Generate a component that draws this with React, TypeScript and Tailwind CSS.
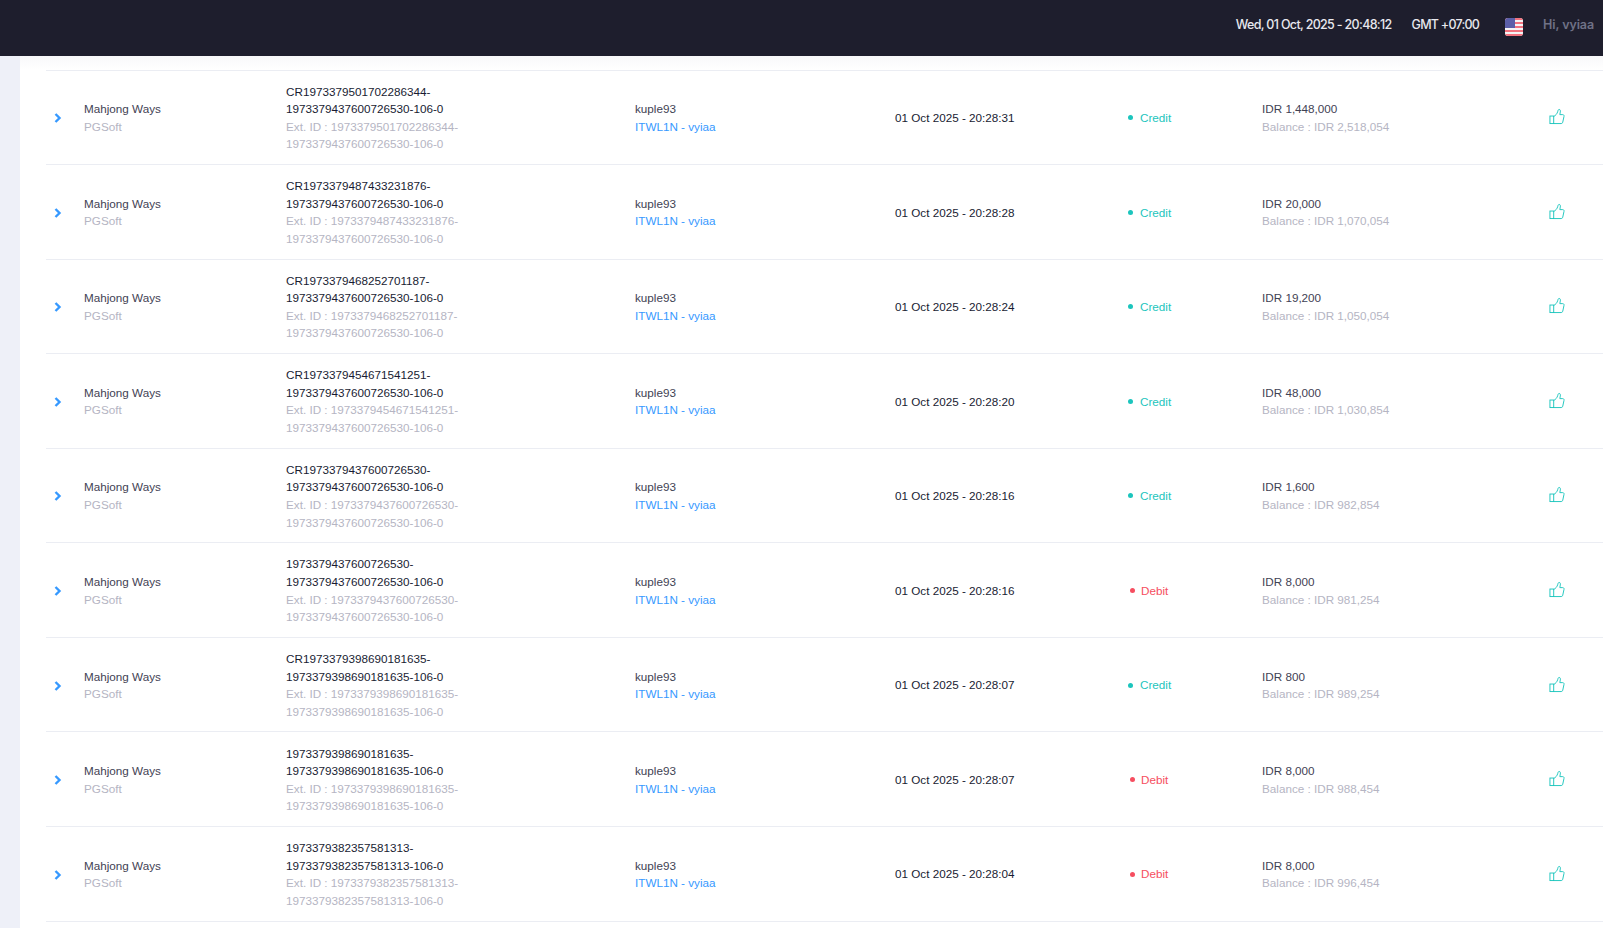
import React from "react";

type Tx = {
  id: string;
  tail: string;
  amount: string;
  balance: string;
  time: string;
  credit: boolean;
};

const rows: Tx[] = [
  { id: "1973379501702286344", tail: "1973379437600726530", amount: "1,448,000", balance: "2,518,054", time: "31", credit: true },
  { id: "1973379487433231876", tail: "1973379437600726530", amount: "20,000", balance: "1,070,054", time: "28", credit: true },
  { id: "1973379468252701187", tail: "1973379437600726530", amount: "19,200", balance: "1,050,054", time: "24", credit: true },
  { id: "1973379454671541251", tail: "1973379437600726530", amount: "48,000", balance: "1,030,854", time: "20", credit: true },
  { id: "1973379437600726530", tail: "1973379437600726530", amount: "1,600", balance: "982,854", time: "16", credit: true },
  { id: "1973379437600726530", tail: "1973379437600726530", amount: "8,000", balance: "981,254", time: "16", credit: false },
  { id: "1973379398690181635", tail: "1973379398690181635", amount: "800", balance: "989,254", time: "07", credit: true },
  { id: "1973379398690181635", tail: "1973379398690181635", amount: "8,000", balance: "988,454", time: "07", credit: false },
  { id: "1973379382357581313", tail: "1973379382357581313", amount: "8,000", balance: "996,454", time: "04", credit: false },
];

const Chevron = () => (
  <svg width="8" height="10" viewBox="0 0 8 10" fill="none">
    <path d="M1.5 1L5.5 5L1.5 9" stroke="#3699ff" strokeWidth="2.4" />
  </svg>
);

const Thumb = () => (
  <svg width="16" height="17" viewBox="0 0 17 17" fill="none" stroke="#1bc5bd" strokeWidth="1">
    <rect x="1" y="8" width="4" height="8" />
    <path d="M5 8.5C7 7.5 8.6 5.5 9.2 3.5C9.5 2.2 9.8 1 10.8 1C12 1 12.3 2.4 12 3.8L11.5 6.5H14.6C15.8 6.5 16.2 7.6 15.9 8.6L14.6 14.6C14.4 15.5 13.8 16 13 16H5" />
  </svg>
);

const Flag = () => (
  <svg width="18" height="18" viewBox="0 0 18 18" className="rounded-[3px]">
    <rect width="18" height="18" fill="#f5f5f5" />
    <rect y="0" width="18" height="2" fill="#f2737f" />
    <rect y="4" width="18" height="2" fill="#f2737f" />
    <rect y="8" width="18" height="2" fill="#f2737f" />
    <rect y="12" width="18" height="2" fill="#f2737f" />
    <rect y="16" width="18" height="2" fill="#f2737f" />
    <rect width="10" height="10" fill="#5b5fa8" />
  </svg>
);

const Row = ({ tx }: { tx: Tx }) => {
  const prefix = tx.credit ? "CR" : "";
  return (
    <div className="grid h-[94.55px] grid-cols-[38px_202px_349px_260px_233px_134px_287px_auto] items-center border-t border-[#ebedf3] pt-[0.8px] text-[11.7px] leading-[17.55px] text-[#3f4254]">
      <div className="flex pl-[8px] pt-[1px]">
        <Chevron />
      </div>
      <div>
        <div>Mahjong Ways</div>
        <div className="text-[#b5b5c3]">PGSoft</div>
      </div>
      <div>
        <div className="text-[#181c32]">
          {prefix}
          {tx.id}-
          <br />
          {tx.tail}-106-0
        </div>
        <div className="text-[#b5b5c3]">
          Ext. ID : {tx.id}-
          <br />
          {tx.tail}-106-0
        </div>
      </div>
      <div>
        <div>kuple93</div>
        <div className="text-[#3699ff]">ITWL1N - vyiaa</div>
      </div>
      <div className="text-[#181c32]">01 Oct 2025 - 20:28:{tx.time}</div>
      <div className={`flex items-center ${tx.credit ? "gap-[7px] text-[#1bc5bd]" : "gap-[6px] pl-[2px] text-[#f64e60]"}`}>
        <span className={`h-[5px] w-[5px] rounded-full ${tx.credit ? "bg-[#1bc5bd]" : "bg-[#f64e60]"}`} />
        {tx.credit ? "Credit" : "Debit"}
      </div>
      <div>
        <div>IDR {tx.amount}</div>
        <div className="text-[#b5b5c3]">Balance : IDR {tx.balance}</div>
      </div>
      <div className="flex pb-[2px]">
        <Thumb />
      </div>
    </div>
  );
};

export default function App() {
  return (
    <div className="flex h-[928px] w-[1603px] flex-col overflow-hidden bg-white font-['Liberation_Sans',Arial,sans-serif]">
      <header className="flex h-14 shrink-0 items-center justify-end bg-[#1e1e2d] pr-[9px] font-['Inter',sans-serif] text-[12.5px] font-medium">
        <span className="pb-[6px] tracking-[-0.67px] text-[#e8e8ee]">Wed, 01 Oct, 2025 - 20:48:12</span>
        <span className="ml-5 pb-[6px] tracking-[-0.75px] text-[#e8e8ee]">GMT +07:00</span>
        <span className="ml-[26px] flex pb-[3px]">
          <Flag />
        </span>
        <span className="ml-5 pb-[6px] font-semibold tracking-[-0.1px] text-[#6f7186]">Hi, vyiaa</span>
      </header>
      <main className="flex min-h-0 flex-1">
        <div className="w-5 shrink-0 bg-[#eef0f8]" />
        <div className="flex-1 overflow-hidden pl-[26px]">
          <div className="-ml-[26px] h-[13.6px] bg-gradient-to-b from-[#f8f8fa] to-white" />
          {rows.map((tx, i) => (
            <Row key={i} tx={tx} />
          ))}
          <div className="border-t border-[#ebedf3]" />
        </div>
      </main>
    </div>
  );
}
